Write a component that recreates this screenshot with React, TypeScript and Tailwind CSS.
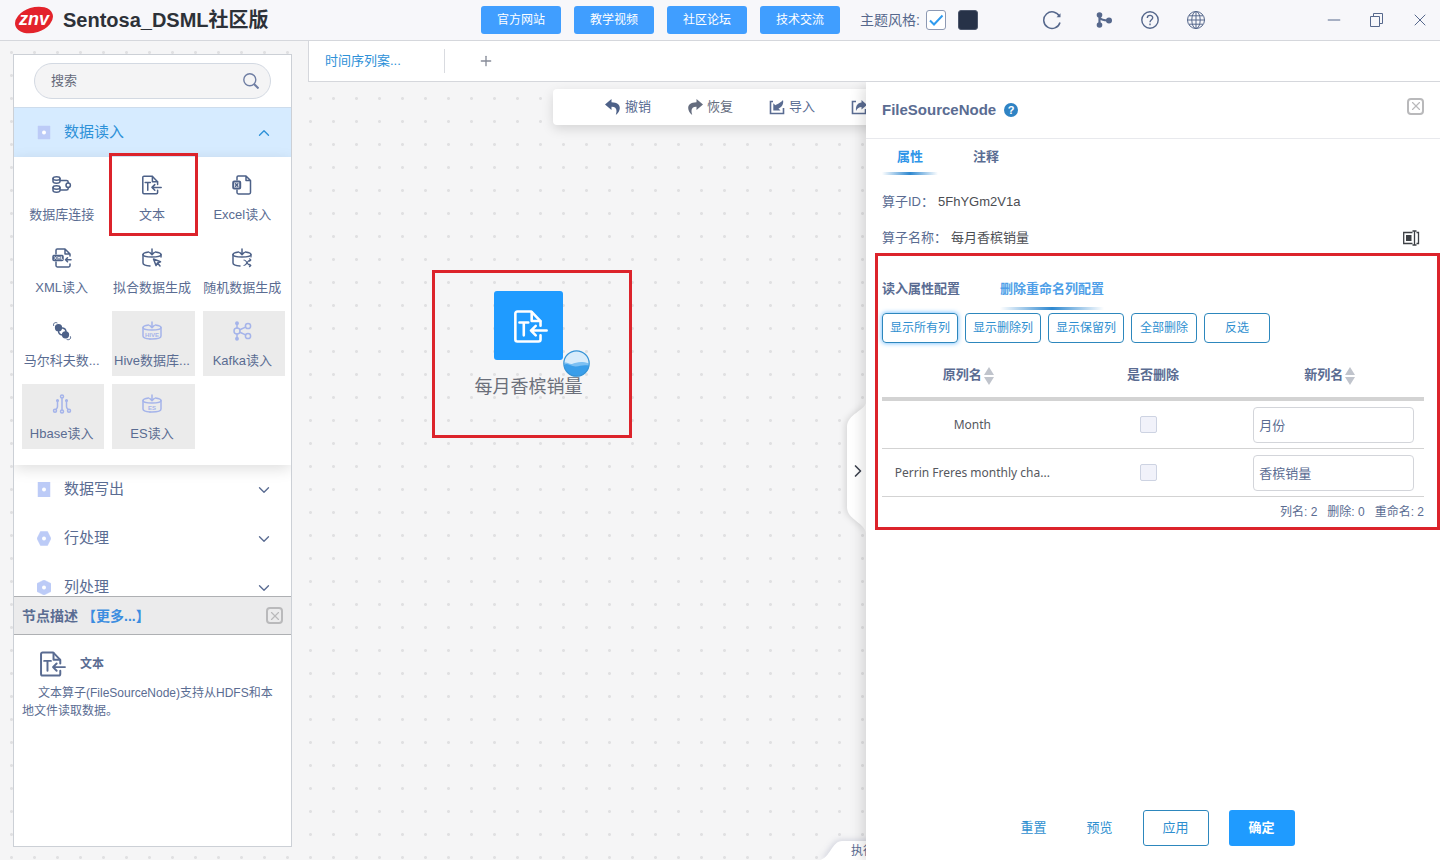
import type { ReactNode } from "react";
import { ChevronDown, ChevronRight, ChevronUp, Minus, Plus, X } from "lucide-react";

const TextFileIcon = ({ className }: { className?: string }) => (
  <svg
    viewBox="0 0 25 24"
    fill="none"
    stroke="currentColor"
    strokeWidth="1.9"
    strokeLinecap="round"
    strokeLinejoin="round"
    className={className}
  >
    <path d="M19.5 11.5V8L12.8 1H2.5C1.6 1 1 1.6 1 2.5v19c0 .9.6 1.5 1.5 1.5H18c.9 0 1.5-.6 1.5-1.5v-3" />
    <path d="M13 1.5V8h6.3M4 9h6.5M7.2 9v9.5M24 15H12.5M16 11.5 12.5 15l3.5 3.5" />
  </svg>
);

const NodeIcon = ({ children }: { children: ReactNode }) => (
  <svg
    viewBox="0 0 20 20"
    fill="none"
    stroke="currentColor"
    strokeWidth="1.5"
    strokeLinecap="round"
    strokeLinejoin="round"
    className="h-5 w-5"
  >
    {children}
  </svg>
);

const DatabaseLinkIcon = () => (
  <NodeIcon>
    <ellipse cx="4.5" cy="3.500" rx="3.500" ry="1.700" />
    <path d="M1 3.500v3c0 2.200 7 2.200 7 0v-3" />
    <ellipse cx="4.500" cy="12.500" rx="3.500" ry="1.700" />
    <path d="M1 12.500v3c0 2.200 7 2.200 7 0v-3M8 5.500h6.500c1 0 1.700.6 1.700 1.500v1M8 15h6.500c1 0 1.700-.6 1.700-1.500v-1" />
    <circle cx="16.200" cy="10.200" r="2.200" />
  </NodeIcon>
);

const ExcelIcon = () => (
  <NodeIcon>
    <path d="M5 5V2.200C5 1.500 5.500 1 6.200 1H14l4.500 4.500v12c0 .8-.6 1.400-1.400 1.400H6.400C5.600 18.900 5 18.300 5 17.500V15M14 1v4.500h4.500" />
    <rect x="1.200" y="6.500" width="7" height="7" rx="1" strokeWidth="2" />
    <path d="m3.500 8.700 2.400 2.600M5.900 8.700l-2.400 2.600" />
  </NodeIcon>
);

const XmlIcon = () => (
  <NodeIcon>
    <path d="M4 6V2.200C4 1.500 4.500 1 5.200 1H13l5 5v2M13 1v5h5M4 14v3.600c0 .8.500 1.300 1.300 1.300h11.400c.8 0 1.300-.5 1.300-1.300V16M19 11.800h-5.500M15.500 9.800l-2 2 2 2" />
    <rect x="1" y="7.500" width="10" height="5" rx="1" fill="currentColor" />
    <path d="m2.500 8.700 2 2.600m0-2.600-2 2.600M6 11.300V8.700l1 1.400 1-1.400v2.600M9.500 8.700v2.600h1" stroke="white" strokeWidth=".8" />
  </NodeIcon>
);

const Barrel = () => (
  <>
    <path d="M6.500 4C3.300 4.500 1 5.300 1 6.500 1 8.200 5 9 10 9s9-.8 9-2.500c0-1.200-2.300-2-5.500-2.500M10 1v5.500M7.800 4.500 10 6.700l2.200-2.200" />
    <path d="M1 6.500V15c0 1.700 3 2.700 7 3" />
  </>
);

const FitDataIcon = () => (
  <NodeIcon>
    <Barrel />
    <path d="M19 6.500V9M11.500 11l2.500 6.500 1.500-2.500 3-1.200zM15.500 15l2.500 3" />
  </NodeIcon>
);

const RandomDataIcon = () => (
  <NodeIcon>
    <Barrel />
    <path d="M19 6.500V9M12 12c3 0 3 5.500 6.500 5.500M12 17.500c3 0 3-5.500 6.500-5.500M17.500 10.800l1.300 1.200-1.300 1.200M17.500 16.300l1.300 1.200-1.300 1.200" strokeWidth="1.200" />
  </NodeIcon>
);

const MarkovIcon = () => (
  <NodeIcon>
    <circle cx="6.500" cy="6.700" r="2.900" fill="currentColor" />
    <circle cx="13.500" cy="13.800" r="2.900" fill="currentColor" />
    <path d="M10.500 7c2.500.5 3.500 1.500 3.500 4M6.500 10c0 2.500 1.500 3.700 4 4" />
    <path d="M5 1.800C3 .8.800 2.500 1.600 4.500M15 18.500c2 1 4.400-.7 3.500-2.800" strokeWidth="1" />
  </NodeIcon>
);

const LabelledBarrel = ({ label }: { label: string }) => (
  <NodeIcon>
    <Barrel />
    <path d="M19 6.500V15c0 1.700-3.500 3-9 3-1 0-1.500 0-2 0" />
    <text
      x="10"
      y="15.500"
      textAnchor="middle"
      fontSize="6"
      fontWeight="700"
      fill="currentColor"
      stroke="none"
    >
      {label}
    </text>
  </NodeIcon>
);

const KafkaIcon = () => (
  <NodeIcon>
    <circle cx="5" cy="10" r="3" />
    <circle cx="16" cy="5" r="2.600" />
    <circle cx="16" cy="15" r="2.600" />
    <circle cx="5" cy="2.200" r="1.200" fill="currentColor" />
    <circle cx="5" cy="17.800" r="1.200" fill="currentColor" />
    <path d="M5 3v4M5 13v4M7.800 8.800l5.800-2.700M7.800 11.200l5.800 2.700" />
  </NodeIcon>
);

const HbaseIcon = () => (
  <NodeIcon>
    <circle cx="10" cy="2.500" r="1.500" />
    <circle cx="10" cy="17.500" r="1.500" />
    <circle cx="3" cy="16.800" r="1.500" />
    <circle cx="17" cy="16.800" r="1.500" />
    <circle cx="5.500" cy="6.500" r=".8" fill="currentColor" />
    <circle cx="14.500" cy="6.500" r=".8" fill="currentColor" />
    <path d="M10 4v12M5.500 7v5.500c0 1.500-.8 2-1.500 3M14.500 7v5.500c0 1.500.8 2 1.500 3" />
  </NodeIcon>
);

const UndoIcon = ({ className }: { className?: string }) => (
  <svg viewBox="0 0 16 16" fill="currentColor" className={className}>
    <path d="M6.500 0 0 5.500 6.500 11V7.700c4.200-.2 6.200 2.300 4.300 8.300C16.500 11.500 17 3.500 6.500 3.300z" />
  </svg>
);

const ImportIcon = () => (
  <svg viewBox="0 0 16 16" fill="none" stroke="currentColor" strokeWidth="1.600" className="h-4 w-4">
    <path d="M4 2.500H1.500v12h13V9" />
    <path d="M4.300 11.500V4.300l2 2C8 5 11 4.500 14 1c1 4-1.500 7.500-4.500 8.500l2 2z" fill="currentColor" stroke="none" />
  </svg>
);

const ExportIcon = () => (
  <svg viewBox="0 0 16 16" fill="none" stroke="currentColor" strokeWidth="1.600" className="h-4 w-4">
    <path d="M5 2.500H1.500v12h13V10" />
    <path d="M10.500 1v2.500C6.500 4 4.500 7 5 12c1.500-3 3-4 5.500-4v2.500L16 5.800z" fill="currentColor" stroke="none" />
  </svg>
);

const CloseBox = ({ label }: { label: string }) => (
  <button
    aria-label={label}
    className="flex h-[17px] w-[17px] items-center justify-center rounded-[4px] border-2 border-[#b9b9bb] text-[#b9b9bb]"
  >
    <X className="h-[14px] w-[14px] shrink-0" strokeWidth={2} />
  </button>
);

const nodes = [
  { name: "数据库连接", icon: <DatabaseLinkIcon /> },
  { name: "文本", icon: <TextFileIcon className="h-5 w-5" />, marked: true },
  { name: "Excel读入", icon: <ExcelIcon /> },
  { name: "XML读入", icon: <XmlIcon /> },
  { name: "拟合数据生成", icon: <FitDataIcon /> },
  { name: "随机数据生成", icon: <RandomDataIcon /> },
  { name: "马尔科夫数...", icon: <MarkovIcon /> },
  { name: "Hive数据库...", icon: <LabelledBarrel label="HIVE" />, disabled: true },
  { name: "Kafka读入", icon: <KafkaIcon />, disabled: true },
  { name: "Hbase读入", icon: <HbaseIcon />, disabled: true },
  { name: "ES读入", icon: <LabelledBarrel label="ES" />, disabled: true },
];

const categories = [
  { name: "数据写出", shape: "M1 0h12v15H1z" },
  { name: "行处理", shape: "M3.500 0.500h7L14 7.500l-3.500 7h-7L0 7.500z" },
  { name: "列处理", shape: "M7 0l7 3.500v8L7 15l-7-3.500v-8z" },
];

const rows = [
  { column: "Month", renamed: "月份" },
  { column: "Perrin Freres monthly cha...", renamed: "香槟销量" },
];

const CategoryIcon = ({ shape }: { shape: string }) => (
  <svg viewBox="0 0 14 15" className="h-[15px] w-[14px]">
    <path d={shape} fill="#bccbf7" stroke="#bccbf7" strokeLinejoin="round" strokeWidth=".5" />
    <circle cx="7" cy="7.500" r="2" fill="white" />
  </svg>
);

const Header = () => (
  <header className="flex h-[41px] shrink-0 items-center border-b border-[#d5d7dc] bg-[#f7f7fa] pr-[10px] pl-[14px] text-[#56688c]">
    <svg viewBox="0 0 40 30" className="mr-[9px] h-[30px] w-10">
      <ellipse cx="20" cy="15" rx="19.500" ry="12.500" transform="rotate(-18 20 15)" fill="#e3232b" />
      <text
        x="20"
        y="20"
        textAnchor="middle"
        fontSize="18"
        fontWeight="700"
        fontStyle="italic"
        fill="white"
      >
        znv
      </text>
    </svg>
    <h1 className="text-xl font-bold text-[#2d3138]">Sentosa_DSML社区版</h1>

    <nav className="ml-auto flex gap-[13px]">
      {["官方网站", "教学视频", "社区论坛", "技术交流"].map((item) => (
        <a
          key={item}
          href="#"
          className="flex h-7 w-20 items-center justify-center rounded-[3px] bg-[#409eff] text-xs text-white"
        >
          {item}
        </a>
      ))}
    </nav>

    <div className="ml-5 flex items-center">
      <label htmlFor="light-theme" className="text-sm">
        主题风格:
      </label>
      <span className="relative ml-[6px] flex">
        <input
          id="light-theme"
          type="checkbox"
          defaultChecked
          className="h-5 w-5 appearance-none rounded-[3px] border border-[#8d99b3] bg-white"
        />
        <svg viewBox="0 0 20 20" fill="none" className="pointer-events-none absolute inset-0 h-5 w-5">
          <path d="m4 10.500 4 4 8.500-9" stroke="#2f9bef" strokeWidth="2" />
        </svg>
      </span>
      <button aria-label="深色主题" className="ml-3 h-5 w-5 rounded-[3px] border border-[#4c566b] bg-[#273248]" />
    </div>

    <div className="ml-16 flex items-center gap-[26px]">
      <button aria-label="刷新" className="mr-[6px]">
        <svg viewBox="0 0 20 20" fill="none" stroke="currentColor" strokeWidth="1.500" className="h-5 w-5">
          <path d="M17.500 6.500A8.300 8.300 0 1 0 18 12.500" />
          <path d="M14.500 7.300h4V3.300z" fill="currentColor" stroke="none" />
        </svg>
      </button>
      <button aria-label="流程" className="flex w-5 justify-center">
        <svg viewBox="0 0 16 16" fill="currentColor" stroke="currentColor" className="h-4 w-4">
          <circle cx="3.500" cy="3" r="2.800" stroke="none" />
          <circle cx="3.500" cy="13" r="2.800" stroke="none" />
          <circle cx="13" cy="8.500" r="3" stroke="none" />
          <path d="M3.500 3v10M3.500 5c1 3 4 3.500 9 3.500" strokeWidth="2.200" fill="none" />
        </svg>
      </button>
      <button aria-label="帮助">
        <svg viewBox="0 0 20 20" fill="none" stroke="currentColor" strokeWidth="1.400" className="h-5 w-5">
          <circle cx="10" cy="10" r="8.200" />
          <path d="M7.300 8c0-3.500 5.400-3.500 5.400-.2 0 2-2.700 2-2.700 4.400M10 13.500v1.700" />
        </svg>
      </button>
      <button aria-label="语言">
        <svg viewBox="0 0 20 20" fill="none" stroke="currentColor" strokeWidth="1" className="h-5 w-5">
          <circle cx="10" cy="10" r="8.500" />
          <ellipse cx="10" cy="10" rx="4.200" ry="8.500" />
          <path d="M10 1.500v17M1.500 10h17M3 5.800h14M3 14.200h14" />
        </svg>
      </button>
    </div>

    <div className="ml-[118px] flex items-center gap-[23px]">
      <button aria-label="最小化">
        <Minus className="h-5 w-5" strokeWidth={1.2} />
      </button>
      <button aria-label="还原">
        <svg viewBox="0 0 20 20" fill="none" stroke="currentColor" strokeWidth="1" className="h-5 w-5">
          <path d="M3.500 6.500h9v10h-9zM6.500 6.500v-3h9v10h-3" />
        </svg>
      </button>
      <button aria-label="关闭">
        <X className="h-5 w-5" strokeWidth={1.2} />
      </button>
    </div>
  </header>
);

const Sidebar = () => (
  <aside className="my-[13px] ml-[13px] flex w-[279px] shrink-0 flex-col border border-[#ccd0d6] bg-white text-[#5a6c92]">
    <div className="flex min-h-0 flex-1 flex-col overflow-hidden">
      <div className="shrink-0 border-b border-[#cddcec] px-5 py-2">
        <div className="flex h-9 items-center rounded-full border border-[#d3d9e2] bg-[#f4f4f5] pr-[11px] pl-4">
          <input
            aria-label="搜索"
            placeholder="搜索"
            className="min-w-0 flex-1 bg-transparent text-[13px] outline-none placeholder:text-[#666a7a]"
          />
          <svg viewBox="0 0 16 16" fill="none" stroke="#6f7ea3" strokeWidth="1.400" className="h-4 w-4">
            <circle cx="6.800" cy="6.800" r="6" />
            <path d="m11 11 4.500 4.500" strokeWidth="2" />
          </svg>
        </div>
      </div>

      <button className="flex h-[49px] shrink-0 items-center bg-[#d6ebff] pr-[18px] pl-[23px] text-[15px] text-[#2e91d8]">
        <CategoryIcon shape="M1 1h12v13H1z" />
        <span className="ml-[13px]">数据读入</span>
        <ChevronUp className="ml-auto h-[18px] w-[18px]" strokeWidth={1.8} />
      </button>
      <div className="grid shrink-0 grid-cols-3 gap-2 pt-2 pr-[6px] pb-4 pl-2 shadow-[0_4px_14px_rgba(0,0,0,0.13)]">
        {nodes.map(({ name, icon, disabled, marked }) => (
          <button
            key={name}
            disabled={disabled}
            className={`relative flex h-[65px] flex-col items-center gap-[10px] pt-[10px] pr-[3px] text-[13px] leading-5 whitespace-nowrap ${
              disabled ? "bg-[#ebebeb]" : ""
            }`}
          >
            <span className={disabled ? "text-[#a5b4ea]" : "text-[#4d6188]"}>{icon}</span>
            {name}
            {marked && <span className="absolute -inset-x-[3px] -top-3 -bottom-[6px] border-[3px] border-[#dc232b]" />}
          </button>
        ))}
      </div>

      {categories.map(({ name, shape }) => (
        <button
          key={name}
          className="flex h-[49px] shrink-0 items-center pr-[18px] pl-[23px] text-[15px]"
        >
          <CategoryIcon shape={shape} />
          <span className="ml-[13px]">{name}</span>
          <ChevronDown className="ml-auto h-[18px] w-[18px]" strokeWidth={1.8} />
        </button>
      ))}
    </div>

    <section className="h-[250px] shrink-0">
      <div className="flex h-[39px] items-center border-y border-[#aeb0b3] bg-[#ebebec] px-2 text-sm font-bold">
        <h2>节点描述</h2>
        <a href="#" className="ml-1 text-[#3b8de0]">
          【更多...】
        </a>
        <span className="ml-auto">
          <CloseBox label="关闭描述" />
        </span>
      </div>
      <div className="mt-4 flex items-center pl-[26px] text-xs font-bold">
        <TextFileIcon className="mr-[14px] h-[26px] w-[26px]" />
        文本
      </div>
      <p className="px-2 pt-[7px] indent-4 text-xs leading-[18px]">
        文本算子(FileSourceNode)支持从HDFS和本地文件读取数据。
      </p>
    </section>
  </aside>
);

const Canvas = () => (
  <div className="relative min-w-0 flex-1 overflow-hidden text-[#5a6c92]">
    <div className="mt-[7px] ml-[245px] flex h-9 w-[420px] items-center gap-9 rounded-[4px] bg-white pb-px pl-[52px] text-[13px] whitespace-nowrap shadow-[0_4px_12px_rgba(0,0,0,0.13)]">
      <button className="flex items-center gap-1">
        <UndoIcon className="h-4 w-4 text-[#4d6188]" />
        撤销
      </button>
      <button className="flex items-center gap-1 text-[#646c7e]">
        <UndoIcon className="h-4 w-4 -scale-x-100" />
        恢复
      </button>
      <button className="flex items-center gap-1">
        <ImportIcon />
        导入
      </button>
      <button aria-label="导出">
        <ExportIcon />
      </button>
    </div>

    <div className="absolute top-[188px] left-[124px] flex h-[168px] w-[200px] flex-col items-center border-[3px] border-[#dc232b] pt-[18px] pr-[7px]">
      <div className="relative flex h-[69px] w-[69px] shrink-0 items-center justify-center rounded-[3px] bg-[#1f9bff] text-white">
        <TextFileIcon className="mt-[2px] ml-1 h-[33px] w-[34px]" />
        <svg viewBox="0 0 27 27" className="absolute top-[59px] left-[69px] h-[27px] w-[27px]">
          <circle cx="13.500" cy="13.500" r="12.700" fill="#d8ecfb" />
          <path d="M1 13c3-1.500 5 1.500 8 1 4-1 8-3.500 17-.5A12.600 12.600 0 0 1 1 13z" fill="#7cc0f3" />
          <path d="M1 15c4-3 7 2 12 1.500 4-.5 7-2 13-1A12.600 12.600 0 0 1 1 15z" fill="#3a9eea" />
          <circle cx="13.500" cy="13.500" r="12.700" fill="none" stroke="#3693d6" strokeWidth="1.200" />
        </svg>
      </div>
      <span className="mt-[14px] text-lg leading-[27px] whitespace-nowrap text-[#6b6f7a]">每月香槟销量</span>
    </div>

    <button
      aria-label="收起面板"
      className="absolute top-[320px] right-0 flex h-[132px] w-[19px] items-center justify-center text-[#3d4350]"
    >
      <svg viewBox="0 0 19 132" className="absolute inset-0 h-[132px] w-[19px] overflow-visible drop-shadow-[-2px_0_3px_rgba(0,0,0,0.12)]">
        <path d="M19 0c0 8-19 12-19 25v80c0 13 19 16 19 27z" fill="white" />
      </svg>
      <ChevronRight className="relative mt-[6px] ml-[3px] h-5 w-5 shrink-0" />
    </button>

    <div className="absolute right-0 bottom-0 h-[19px] w-[46px] text-xs">
      <svg viewBox="0 0 46 19" className="absolute inset-0 h-[19px] w-[46px] overflow-visible drop-shadow-[-1px_-1px_3px_rgba(60,70,120,0.2)]">
        <path d="M0 19C10 17 12 0 22 0h40v19z" fill="white" />
      </svg>
      <span className="relative ml-[31px] leading-5 whitespace-nowrap">执行</span>
    </div>
  </div>
);

const SortIcon = () => (
  <svg viewBox="0 0 10 18" className="ml-[2px] inline h-[18px] w-[10px] align-middle" fill="#c0c4cc">
    <path d="M5 0l5 8H0zM5 18l5-8H0z" />
  </svg>
);

const filterButton = "h-[30px] rounded-[4px] border border-[#2d87bd] text-xs text-[#2e8fd0]";
const headCell = "border-b-4 border-[#d3d3d3] pt-[10px]";
const bodyCell = "border-b border-[#d3d3d3]";

const PropertyPanel = () => (
  <section className="relative z-10 flex w-[574px] shrink-0 flex-col bg-white text-[13px] text-[#5a6c92] shadow-[-4px_4px_12px_rgba(0,0,0,0.13)]">
    <div className="flex h-[57px] items-center border-b border-[#e8e9ed] px-4">
      <h2 className="text-[15px] font-bold">FileSourceNode</h2>
      <button
        aria-label="帮助"
        className="ml-2 flex h-[14px] w-[14px] items-center justify-center rounded-full bg-[#2f83c4] text-[11px] leading-none font-bold text-white"
      >
        ?
      </button>
      <span className="mb-2 ml-auto">
        <CloseBox label="关闭" />
      </span>
    </div>

    <div className="flex h-9 gap-5 pl-4 font-bold">
      <button className="flex w-14 flex-col items-center justify-between pt-2 leading-5 text-[#2e95e8]">
        属性
        <span className="h-[3px] w-full bg-linear-to-r from-transparent via-[#2e88d0] to-transparent" />
      </button>
      <button className="flex w-14 flex-col items-center pt-2 leading-5">注释</button>
    </div>

    <div className="mt-[9px] flex h-9 items-center gap-1 pl-4">
      算子ID：<span className="text-[#4b4d52]">5FhYGm2V1a</span>
    </div>
    <div className="flex h-9 items-center gap-1 pr-5 pl-4">
      算子名称：<span className="text-[#4b4d52]">每月香槟销量</span>
      <button aria-label="编辑名称" className="ml-auto text-[#3d4045]">
        <svg viewBox="0 0 18 16" fill="none" stroke="currentColor" strokeWidth="1.300" className="h-4 w-[18px]">
          <path d="M10.500 2.500H1.700v11h8.800M14.500 2.500h2v11h-2M10.500 1h4M10.500 15h4M12.500 1v14" />
          <path d="M4 5h5.500v6H4z" fill="currentColor" stroke="none" />
        </svg>
      </button>
    </div>

    <div className="-mt-[3px] ml-[9px] border-[3px] border-[#dc232b] pr-[13px] pl-1">
      <div className="flex h-[57px] gap-10 pt-[23px] font-bold">
        <button className="flex flex-col leading-5">读入属性配置</button>
        <button className="flex flex-col items-center justify-between pb-[3px] leading-5 text-[#4f9fe8]">
          删除重命名列配置
          <span className="h-[3px] w-full bg-linear-to-r from-transparent via-[#2e88d0] to-transparent" />
        </button>
      </div>
      <div className="flex gap-[7px]">
        <button className={`${filterButton} w-[76px] shadow-[0_0_5px_#5cb4ff]`}>显示所有列</button>
        <button className={`${filterButton} w-[76px]`}>显示删除列</button>
        <button className={`${filterButton} w-[76px]`}>显示保留列</button>
        <button className={`${filterButton} w-[66px]`}>全部删除</button>
        <button className={`${filterButton} w-[66px]`}>反选</button>
      </div>

      <table className="w-full table-fixed border-separate border-spacing-0 text-center">
        <thead>
          <tr className="h-[58px]">
            <th className={`${headCell} pr-2`}>
              原列名
              <SortIcon />
            </th>
            <th className={headCell}>是否删除</th>
            <th className={`${headCell} pr-2`}>
              新列名
              <SortIcon />
            </th>
          </tr>
        </thead>
        <tbody>
          {rows.map(({ column, renamed }) => (
            <tr key={column} className="h-12">
              <td className={`${bodyCell} font-['Noto_Sans',sans-serif] text-xs whitespace-nowrap text-[#55585e]`}>
                {column}
              </td>
              <td className={`${bodyCell} pr-2`}>
                <input
                  type="checkbox"
                  aria-label={`删除 ${column}`}
                  className="mx-auto block h-[17px] w-[17px] appearance-none rounded-[2px] border border-[#cdd3e2] bg-[#f1f2fa]"
                />
              </td>
              <td className={`${bodyCell} px-[10px]`}>
                <input
                  aria-label={`${column} 新列名`}
                  defaultValue={renamed}
                  className="block h-9 w-full rounded-[4px] border border-[#d3d5da] px-[5px] outline-none"
                />
              </td>
            </tr>
          ))}
        </tbody>
      </table>
      <p className="flex h-[30px] items-center justify-end gap-[10px] text-xs">
        <span>列名: 2</span>
        <span>删除: 0</span>
        <span>重命名: 2</span>
      </p>
    </div>

    <footer className="mt-auto mb-[14px] flex h-9 justify-center pr-[11px] text-[#2e8fd0]">
      <button className="w-[66px]">重置</button>
      <button className="mr-[10px] w-[66px]">预览</button>
      <button className="mr-5 w-[66px] rounded-[3px] border border-[#2d87bd]">应用</button>
      <button className="w-[66px] rounded-[3px] bg-[#1f9bff] font-bold text-white">确定</button>
    </footer>
  </section>
);

const App = () => (
  <div className="flex h-screen flex-col overflow-hidden bg-[#f5f5f6] bg-[radial-gradient(circle,#e0e0e2_1px,transparent_2px)] bg-size-[23px_23px] bg-position-[0px_-5px] font-['Liberation_Sans','Noto_Sans_CJK_SC',sans-serif]">
    <Header />
    <div className="flex min-h-0 flex-1">
      <Sidebar />
      <main className="ml-4 flex min-w-0 flex-1 flex-col">
        <div className="relative z-20 flex h-[41px] shrink-0 items-center border-b border-l border-[#d5d7dc] bg-white pl-4">
          <button className="w-[119px] text-left text-[13px] text-[#2e91d8]">时间序列案...</button>
          <span className="h-6 border-l border-[#d9dbe0]" />
          <button aria-label="新建" className="ml-[33px] text-[#868b98]">
            <Plus className="h-4 w-4" />
          </button>
        </div>
        <div className="flex min-h-0 flex-1">
          <Canvas />
          <PropertyPanel />
        </div>
      </main>
    </div>
  </div>
);

export default App;
